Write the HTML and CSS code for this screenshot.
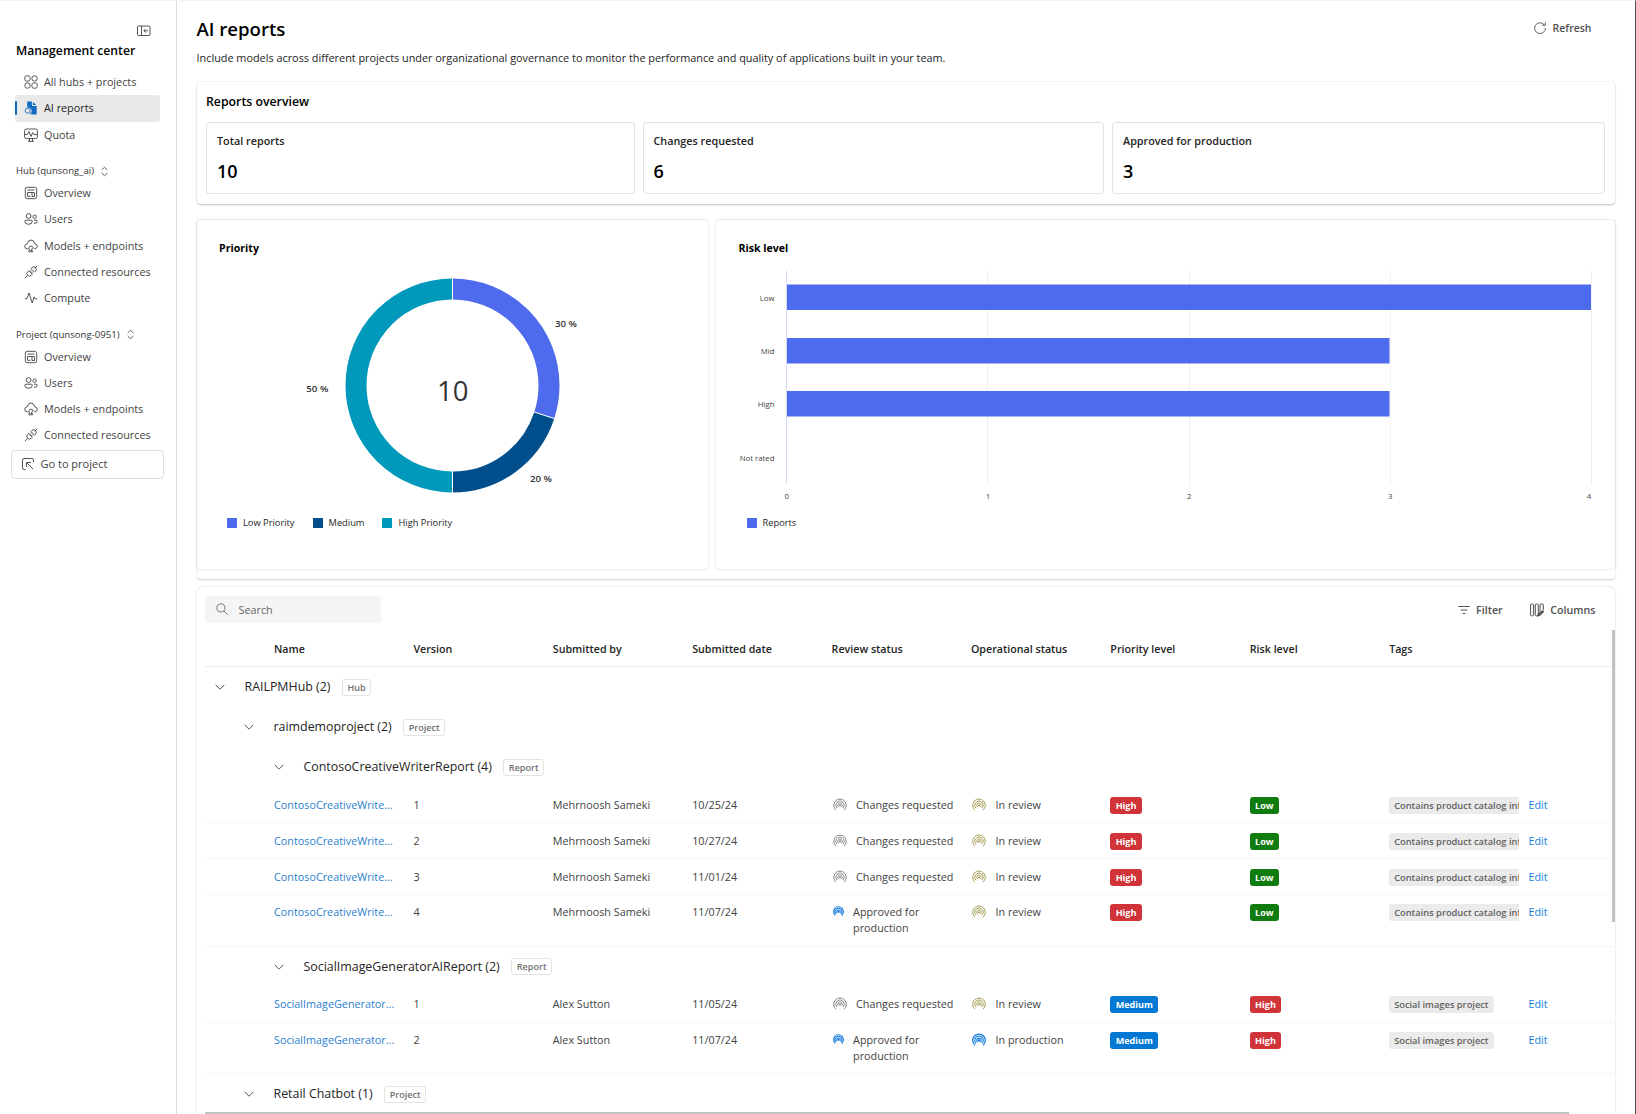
FILE: index.html
```html
<!DOCTYPE html>
<html lang="en">
<head>
    <meta charset="UTF-8">
    <meta name="viewport" content="width=device-width, initial-scale=1.0">
    <title>AI reports - Management center</title>
    <link rel="stylesheet" href="styles.css">
</head>
<body>

    <!-- Icons -->
    <svg class="icon-defs">
        <symbol id="i-collapse" viewBox="0 0 14 12"><rect x=".5" y="1" width="12.5" height="9.5" rx="1"/><path d="M4.500 1v9.5M11 5.800H7M8.600 4L6.800 5.800l1.800 1.800"/></symbol>
        <symbol id="i-hubs" viewBox="0 0 14 14"><rect x=".8" y=".8" width="5.300" height="5.300" rx="1.800"/><rect x="7.900" y=".8" width="5.300" height="5.300" rx="2.500"/><rect x=".8" y="7.900" width="5.300" height="5.300" rx="2.500"/><rect x="7.900" y="7.900" width="5.300" height="5.300" rx="1.800"/></symbol>
        <symbol id="i-report" viewBox="0 0 14 14"><path class="solid" d="M3.200 1.300Q3.200.5 4 .5h3.900v3.600q0 .9.9.9h3.900v7.600q0 .8-.8.8H8.200L6.900 12q1.200-1.600.5-3.400Q6.200 6.200 3.200 6.400z"/><path class="solid" d="M8.900.9l3.400 3.200H8.900z"/><circle cx="3.700" cy="9.700" r="2.500"/><path d="M5.500 11.500l2 2"/></symbol>
        <symbol id="i-quota" viewBox="0 0 14 14"><rect x=".6" y="1" width="12.800" height="9.600" rx="1.800"/><path d="M4 13.300h6M5.500 10.800v2.400M8.500 10.800v2.400M.8 6.500h2.500l1.700-3 2 5 1.700-4 1.200 2h3.300"/></symbol>
        <symbol id="i-overview" viewBox="0 0 14 14"><rect x="1.300" y="1.300" width="11.400" height="11.400" rx="2"/><path d="M3.500 4h7M3.500 6.500h7M3.500 6.500v3.800H6.500M8 7v3.500h2.500V7"/></symbol>
        <symbol id="i-users" viewBox="0 0 14 14"><circle cx="4.600" cy="4" r="2.400"/><circle cx="10.600" cy="4.700" r="1.700"/><path d="M2 8.200h5.300q1 0 1 1.100 0 3-3.700 3T.8 9.300q0-1.100 1.200-1.100zM9.900 8.200h2.300q1 0 1 1 0 2.300-3.200 2.200"/></symbol>
        <symbol id="i-cloud" viewBox="0 0 14 14"><path d="M4 9.800h-.7Q.7 9.600.7 7.300.8 5 3.300 4.800 3.900 1 7 1t3.700 3.800q2.500.2 2.600 2.500-.1 2.300-2.500 2.500h-.6"/><path d="M5 8.800Q5 7.200 7 7.200T9.200 8.800q0 1.200-1.600 1.200v1.500M5 8.800q-.5 2 .8 2.200"/><circle cx="5.600" cy="12.200" r=".9"/><circle cx="7.900" cy="12.300" r=".8"/></symbol>
        <symbol id="i-plug" viewBox="0 0 14 14"><path d="M.8 13.200l2.500-2.500M13.200.8l-2.500 2.500M4.800 5.600l3.600 3.600-1.100 1.100q-1.900 1.700-3.700 0-1.800-1.900 0-3.600zM6.900 3.500L8 2.400q1.800-1.500 3.500.100 1.600 1.700.1 3.500l-1.100 1.100z"/><path d="M5.900 6.800l1.600-1.500M7.300 8.200l1.500-1.500"/></symbol>
        <symbol id="i-pulse" viewBox="0 0 14 14"><path d="M.8 7.800h2L5 2l3.200 10L10.200 6l.9 1.800h2.100"/></symbol>
        <symbol id="i-updown" viewBox="0 0 8 12"><path d="M.8 4.200L4 1.200l3.200 3M.8 7.800l3.200 3 3.200-3"/></symbol>
        <symbol id="i-goto" viewBox="0 0 14 14"><path d="M12.500 5V3q0-1.500-1.500-1.500H3Q1.500 1.500 1.500 3v8q0 1.500 1.500 1.500h1.500M5.500 10V5.500H10M5.700 5.700l6.300 6.300"/></symbol>
        <symbol id="i-refresh" viewBox="0 0 14 14"><path d="M11.500 4.200A5.400 5.400 0 1 0 12.400 7M12.300 1.300v3H9.300"/></symbol>
        <symbol id="i-search" viewBox="0 0 14 14"><circle cx="5.500" cy="5.500" r="4.500"/><path d="M8.800 8.800l4.400 4.400"/></symbol>
        <symbol id="i-filter" viewBox="0 0 12 10"><path d="M.5 1.500h11M2.700 5h6.600M4.700 8.500h2.600"/></symbol>
        <symbol id="i-columns" viewBox="0 0 14 14"><rect x=".6" y="1" width="3" height="11.800" rx="1"/><rect x="5.300" y="1" width="3" height="11.800" rx="1"/><path d="M10 9V2q0-1 1-1h1.300q1 0 1 1v5"/><path class="solid" d="M7 13.800l.7-2.700 4.900-4.100 1.700 1.700-4.600 4.300z"/></symbol>
        <symbol id="i-chevron" viewBox="0 0 10 6"><path d="M.6.800L5 5.200 9.400.8"/></symbol>
        <symbol id="i-signal" viewBox="0 0 14 14"><path d="M3 12.200a6.300 6.300 0 1 1 8 0M4 10.200a4.200 4.200 0 1 1 6 0"/><path d="M5.500 8.900a2.200 2.200 0 1 1 3 0"/><circle class="dot" cx="7" cy="7.400" r=".6"/></symbol>
    </svg>

    <div class="page">

        <!-- Sidebar -->
        <nav class="sidebar">
            <div class="collapse"><svg class="icon-collapse"><use href="#i-collapse"/></svg></div>
            <h2 class="sidebar-title">Management center</h2>
            <a class="nav-item"><svg class="icon"><use href="#i-hubs"/></svg>All hubs + projects</a>
            <a class="nav-item active"><svg class="icon"><use href="#i-report"/></svg>AI reports</a>
            <a class="nav-item"><svg class="icon"><use href="#i-quota"/></svg>Quota</a>

            <div class="nav-group">Hub (qunsong_ai)<svg class="icon-updown"><use href="#i-updown"/></svg></div>
            <a class="nav-item"><svg class="icon"><use href="#i-overview"/></svg>Overview</a>
            <a class="nav-item"><svg class="icon"><use href="#i-users"/></svg>Users</a>
            <a class="nav-item"><svg class="icon"><use href="#i-cloud"/></svg>Models + endpoints</a>
            <a class="nav-item"><svg class="icon"><use href="#i-plug"/></svg>Connected resources</a>
            <a class="nav-item"><svg class="icon"><use href="#i-pulse"/></svg>Compute</a>

            <div class="nav-group">Project (qunsong-0951)<svg class="icon-updown"><use href="#i-updown"/></svg></div>
            <a class="nav-item"><svg class="icon"><use href="#i-overview"/></svg>Overview</a>
            <a class="nav-item"><svg class="icon"><use href="#i-users"/></svg>Users</a>
            <a class="nav-item"><svg class="icon"><use href="#i-cloud"/></svg>Models + endpoints</a>
            <a class="nav-item"><svg class="icon"><use href="#i-plug"/></svg>Connected resources</a>
            <a class="goto"><svg class="icon"><use href="#i-goto"/></svg>Go to project</a>
        </nav>

        <!-- Main content -->
        <main class="main">
            <div class="page-header">
                <h1>AI reports</h1>
                <a class="refresh"><svg class="icon"><use href="#i-refresh"/></svg>Refresh</a>
            </div>
            <p class="intro">Include models across different projects under organizational governance to monitor the performance and quality of applications built in your team.</p>

            <section class="overview">
                <h3>Reports overview</h3>
                <div class="stats">
                    <div class="stat"><span class="stat-label">Total reports</span><span class="stat-value">10</span></div>
                    <div class="stat"><span class="stat-label">Changes requested</span><span class="stat-value">6</span></div>
                    <div class="stat"><span class="stat-label">Approved for production</span><span class="stat-value">3</span></div>
                </div>
            </section>

            <section class="charts">
                <div class="chart-card">
                    <h4>Priority</h4>
                    <svg class="donut" viewBox="0 0 464 240">
                        <g transform="rotate(-90 233.5 128.5)" fill="none" stroke-width="21">
                            <circle cx="233.5" cy="128.5" r="96.5" stroke="#4f6bed" stroke-dasharray="181.9 606.33"/>
                            <circle cx="233.5" cy="128.5" r="96.5" stroke="#004e8c" stroke-dasharray="121.27 606.33" stroke-dashoffset="-181.9"/>
                            <circle cx="233.5" cy="128.5" r="96.5" stroke="#0099bc" stroke-dasharray="303.16 606.33" stroke-dashoffset="-303.17"/>
                        </g>
                        <path d="M233.5 20v24M233.5 212v25M314.300 154.700l22 7.200" stroke="#fff"/>
                        <text class="donut-total" x="233.800" y="144">10</text>
                        <text class="donut-label" x="336" y="70">30 %</text>
                        <text class="donut-label" x="311" y="225">20 %</text>
                        <text class="donut-label" x="87.300" y="135">50 %</text>
                    </svg>
                    <div class="legend">
                        <span class="legend-item"><i class="swatch low"></i>Low Priority</span>
                        <span class="legend-item"><i class="swatch medium"></i>Medium</span>
                        <span class="legend-item"><i class="swatch high"></i>High Priority</span>
                    </div>
                </div>
                <div class="chart-card">
                    <h4>Risk level</h4>
                    <svg class="bars" viewBox="0 0 860 240">
                        <path d="M248.500 13.500v214M450.500 13.500v214M651.500 13.500v214M852.500 13.500v214" stroke="#f0f0f0"/>
                        <path d="M47.500 13.500v214" stroke="#d5dafa"/>
                        <g fill="#4f6bed">
                            <rect x="48" y="27.500" width="804" height="25.500"/>
                            <rect x="48" y="81" width="602.500" height="25.500"/>
                            <rect x="48" y="134" width="602.500" height="25.500"/>
                        </g>
                        <g class="axis-y">
                            <text x="35.500" y="44">Low</text>
                            <text x="35.500" y="97">Mid</text>
                            <text x="35.500" y="150">High</text>
                            <text x="35.500" y="204">Not rated</text>
                        </g>
                        <g class="axis-x">
                            <text x="47.700" y="242">0</text>
                            <text x="249" y="242">1</text>
                            <text x="450.300" y="242">2</text>
                            <text x="651.300" y="242">3</text>
                            <text x="850" y="242">4</text>
                        </g>
                    </svg>
                    <div class="legend">
                        <span class="legend-item"><i class="swatch low"></i>Reports</span>
                    </div>
                </div>
            </section>

            <section class="table-card">
                <div class="toolbar">
                    <div class="search"><svg class="icon-search"><use href="#i-search"/></svg>Search</div>
                    <a class="tool"><svg class="icon-filter"><use href="#i-filter"/></svg>Filter</a>
                    <a class="tool"><svg class="icon-columns"><use href="#i-columns"/></svg>Columns</a>
                </div>

                <div class="table">
                    <div class="row head">
                        <span>Name</span><span>Version</span><span>Submitted by</span><span>Submitted date</span><span>Review status</span><span>Operational status</span><span>Priority level</span><span>Risk level</span><span>Tags</span>
                    </div>

                    <div class="group level-1"><svg class="chevron"><use href="#i-chevron"/></svg>RAILPMHub (2)<span class="kind">Hub</span></div>
                    <div class="group level-2"><svg class="chevron"><use href="#i-chevron"/></svg>raimdemoproject (2)<span class="kind">Project</span></div>
                    <div class="group level-3"><svg class="chevron"><use href="#i-chevron"/></svg>ContosoCreativeWriterReport (4)<span class="kind">Report</span></div>

                    <div class="row">
                        <a class="link">ContosoCreativeWrite...</a><span>1</span><span>Mehrnoosh Sameki</span><span>10/25/24</span>
                        <span class="status"><svg class="signal gray"><use href="#i-signal"/></svg>Changes requested</span>
                        <span class="status"><svg class="signal olive"><use href="#i-signal"/></svg>In review</span>
                        <span><b class="badge red">High</b></span><span><b class="badge green">Low</b></span>
                        <span class="tags"><b class="tag">Contains product catalog info</b></span><a class="link edit">Edit</a>
                    </div>
                    <div class="row">
                        <a class="link">ContosoCreativeWrite...</a><span>2</span><span>Mehrnoosh Sameki</span><span>10/27/24</span>
                        <span class="status"><svg class="signal gray"><use href="#i-signal"/></svg>Changes requested</span>
                        <span class="status"><svg class="signal olive"><use href="#i-signal"/></svg>In review</span>
                        <span><b class="badge red">High</b></span><span><b class="badge green">Low</b></span>
                        <span class="tags"><b class="tag">Contains product catalog info</b></span><a class="link edit">Edit</a>
                    </div>
                    <div class="row">
                        <a class="link">ContosoCreativeWrite...</a><span>3</span><span>Mehrnoosh Sameki</span><span>11/01/24</span>
                        <span class="status"><svg class="signal gray"><use href="#i-signal"/></svg>Changes requested</span>
                        <span class="status"><svg class="signal olive"><use href="#i-signal"/></svg>In review</span>
                        <span><b class="badge red">High</b></span><span><b class="badge green">Low</b></span>
                        <span class="tags"><b class="tag">Contains product catalog info</b></span><a class="link edit">Edit</a>
                    </div>
                    <div class="row tall">
                        <a class="link">ContosoCreativeWrite...</a><span>4</span><span>Mehrnoosh Sameki</span><span>11/07/24</span>
                        <span class="status"><svg class="signal blue small"><use href="#i-signal"/></svg>Approved for<br>production</span>
                        <span class="status"><svg class="signal olive"><use href="#i-signal"/></svg>In review</span>
                        <span><b class="badge red">High</b></span><span><b class="badge green">Low</b></span>
                        <span class="tags"><b class="tag">Contains product catalog info</b></span><a class="link edit">Edit</a>
                    </div>

                    <div class="group level-3"><svg class="chevron"><use href="#i-chevron"/></svg>SocialImageGeneratorAIReport (2)<span class="kind">Report</span></div>

                    <div class="row">
                        <a class="link">SocialImageGenerator...</a><span>1</span><span>Alex Sutton</span><span>11/05/24</span>
                        <span class="status"><svg class="signal gray"><use href="#i-signal"/></svg>Changes requested</span>
                        <span class="status"><svg class="signal olive"><use href="#i-signal"/></svg>In review</span>
                        <span><b class="badge blue-bg">Medium</b></span><span><b class="badge red">High</b></span>
                        <span class="tags"><b class="tag">Social images project</b></span><a class="link edit">Edit</a>
                    </div>
                    <div class="row tall">
                        <a class="link">SocialImageGenerator...</a><span>2</span><span>Alex Sutton</span><span>11/07/24</span>
                        <span class="status"><svg class="signal blue small"><use href="#i-signal"/></svg>Approved for<br>production</span>
                        <span class="status"><svg class="signal blue strong"><use href="#i-signal"/></svg>In production</span>
                        <span><b class="badge blue-bg">Medium</b></span><span><b class="badge red">High</b></span>
                        <span class="tags"><b class="tag">Social images project</b></span><a class="link edit">Edit</a>
                    </div>

                    <div class="group level-2"><svg class="chevron"><use href="#i-chevron"/></svg>Retail Chatbot (1)<span class="kind">Project</span></div>
                    <div class="scroll-y"></div>
                    <div class="scroll-x"></div>
                </div>
            </section>
        </main>
    </div>

</body>
</html>
```
FILE: styles.css
```css
* {
    box-sizing: border-box;
}

body {
    margin: 0;
    font-family: "Open Sans", "Noto Sans", sans-serif;
    font-size: 10.8px;
    line-height: 16px;
    color: #424242;
    background: #fff;
    overflow: hidden;
}

h1, h2, h3, h4, p {
    margin: 0;
    color: #000;
    font-weight: 600;
}

svg {
    flex: none;
    fill: none;
    stroke: currentColor;
    overflow: visible;
}

.icon-defs {
    display: none;
}

.solid {
    fill: currentColor;
    stroke: none;
}

.icon {
    width: 14px;
    height: 14px;
    stroke-width: 0.9;
}

.page {
    display: flex;
    height: 1114px;
    border-top: 1px solid #f3f4f9;
    border-right: 1px solid #505050;
    overflow: hidden;
}

/* Sidebar */
.sidebar {
    flex: none;
    width: 177px;
    padding: 24px 12px 0 11px;
    border-right: 1px solid #dcdcdc;
}

.collapse {
    display: flex;
    justify-content: flex-end;
    height: 16px;
    padding-right: 13px;
}

.icon-collapse {
    width: 14px;
    height: 12px;
    stroke-width: 0.9;
}

.sidebar-title {
    font-size: 12.2px;
    line-height: 20px;
    margin: 0 0 8px 5px;
}

.nav-item {
    display: flex;
    align-items: center;
    gap: 6.5px;
    width: 145px;
    height: 26.3px;
    margin-left: 4px;
    padding-left: 8.5px;
    border-radius: 3px;
    font-size: 10.8px;
    white-space: nowrap;
}

.nav-item.active {
    background: #e9e9e9;
    color: #242424;
    padding-left: 0;
}

.nav-item.active::before {
    content: "";
    width: 2px;
    height: 14px;
    border-radius: 1px;
    background: #0f6cbd;
}

.nav-item.active .icon {
    color: #0f6cbd;
}

.nav-group {
    display: flex;
    align-items: center;
    gap: 7px;
    height: 17px;
    margin: 15px 0 0 5px;
    font-size: 9.6px;
    color: #333;
}

.icon-updown {
    width: 7px;
    height: 11px;
    stroke-width: 0.9;
}

.goto {
    display: flex;
    align-items: center;
    gap: 5.5px;
    height: 29px;
    width: 153px;
    margin-top: 1px;
    padding-left: 9px;
    border: 1px solid #dedede;
    border-radius: 4px;
    font-size: 11px;
}

/* Main column */
.main {
    flex: 1;
    min-width: 0;
    padding: 14px 20.5px 0 19.5px;
}

.page-header {
    display: flex;
    justify-content: space-between;
    height: 28px;
}

h1 {
    font-size: 18.6px;
    line-height: 27px;
}

.refresh {
    display: flex;
    align-items: center;
    gap: 6px;
    height: 26px;
    margin-right: 23px;
    font-weight: 600;
    font-size: 10.5px;
    color: #505050;
}

.intro {
    font-weight: 400;
    font-size: 10.86px;
    color: #242424;
    height: 39px;
    padding-top: 7px;
}

.overview {
    height: 122px;
    padding: 11px 9.5px 0;
    border-radius: 4px;
    box-shadow: 0 1px 2px rgba(0, 0, 0, 0.22), 0 0 2px rgba(0, 0, 0, 0.12);
}

.overview h3 {
    font-size: 12.3px;
    line-height: 18px;
    margin-bottom: 11px;
}

.stats {
    display: grid;
    grid-template-columns: 428.5px 461.5px 1fr;
    gap: 8px;
}

.stat {
    display: flex;
    flex-direction: column;
    height: 72px;
    padding: 10px;
    border: 1px solid #e2e2e2;
    border-radius: 3px;
}

.stat-label {
    font-weight: 600;
    font-size: 10.8px;
    color: #242424;
}

.stat-value {
    margin-top: 10px;
    font-weight: 600;
    font-size: 18px;
    line-height: 24px;
    color: #000;
}

/* Charts */
.charts {
    display: grid;
    grid-template-columns: 511.5px minmax(0, 1fr);
    gap: 8px;
    height: 359px;
    margin-top: 16px;
    padding-bottom: 10px;
    border-radius: 4px;
    box-shadow: 0 1px 2px rgba(0, 0, 0, 0.2);
}

.chart-card {
    padding: 19px 0 0 22.5px;
    border-radius: 3px;
    box-shadow: 0 0 2px rgba(0, 0, 0, 0.24);
}

.chart-card h4 {
    font-size: 10.6px;
    font-weight: 700;
    line-height: 18px;
}

.donut, .bars {
    display: block;
    height: 240px;
    stroke: none;
}

.donut {
    width: 464px;
}

.bars {
    width: 860px;
}

.donut-total {
    font-size: 27.5px;
    fill: #333;
    text-anchor: middle;
}

.donut-label {
    font-size: 9.7px;
    font-weight: 600;
    fill: #333;
}

.axis-y, .axis-x {
    font-size: 7.8px;
    fill: #444;
    text-anchor: end;
}

.axis-x {
    text-anchor: middle;
}

.legend {
    display: flex;
    gap: 18px;
    margin-top: 18px;
    padding-left: 8px;
    font-size: 9.3px;
    color: #242424;
}

.legend-item {
    display: flex;
    align-items: center;
    gap: 6px;
}

.swatch {
    width: 10px;
    height: 10px;
}

.low {
    background: #4f6bed;
}

.medium {
    background: #004e8c;
}

.high {
    background: #0099bc;
}

/* Reports table */
.table-card {
    height: 560px;
    margin-top: 8px;
    padding: 9px 0 0 8.5px;
    border-radius: 6px;
    box-shadow: 0 0 2px rgba(0, 0, 0, 0.22);
}

.toolbar {
    display: flex;
    align-items: center;
    height: 27px;
    margin-bottom: 7px;
    padding-right: 19px;
}

.search {
    display: flex;
    align-items: center;
    gap: 10px;
    width: 176px;
    height: 27px;
    margin-right: auto;
    padding-left: 11px;
    background: #f5f5f5;
    border-radius: 3px;
    color: #666;
}

.icon-search {
    width: 12.5px;
    height: 12.5px;
}

.tool {
    display: flex;
    align-items: center;
    gap: 6.5px;
    margin-left: 27px;
    font-weight: 600;
    font-size: 10.7px;
    color: #505050;
}

.icon-filter {
    width: 12px;
    height: 10px;
}

.icon-columns {
    width: 14px;
    height: 14px;
}

.table {
    position: relative;
    height: 484px;
}

.row {
    display: grid;
    grid-template-columns: repeat(9, 139.4px) 60px;
    height: 35.9px;
    padding: 9.5px 0 0 69px;
    border-bottom: 1px solid #f6f6f6;
    white-space: nowrap;
}

.head {
    height: 37px;
    padding-top: 10.5px;
    border-bottom-color: #ededed;
    font-weight: 600;
    font-size: 10.7px;
    color: #242424;
}

.tall {
    height: 51.7px;
    padding-top: 9px;
}

.group {
    display: flex;
    align-items: center;
    height: 40.1px;
    font-size: 12.4px;
    color: #242424;
}

.level-1 {
    padding-left: 10px;
}

.level-2 {
    padding-left: 39px;
}

.level-3 {
    padding-left: 69px;
}

.chevron {
    width: 10px;
    height: 6px;
    margin-right: 19.5px;
    color: #555;
}

.kind {
    height: 17px;
    margin-left: 11.5px;
    padding: 0 4.5px;
    border: 1px solid #e3e3e3;
    border-radius: 3px;
    font-size: 9.1px;
    font-weight: 600;
    line-height: 15px;
    color: #707070;
}

.link {
    color: #2b7fd0;
}

.edit {
    color: #1a7fe0;
}

.status {
    display: flex;
    align-items: flex-start;
    gap: 9.5px;
    padding-left: 1px;
}

.signal {
    width: 14px;
    height: 14px;
    margin-top: 1px;
    stroke-width: 0.9;
}

.signal.small {
    width: 11px;
    height: 11px;
    margin-top: 2px;
    stroke-width: 1.4;
}

.signal.strong {
    stroke-width: 1.3;
}

.dot {
    fill: currentColor;
}

.gray {
    color: #777;
}

.olive {
    color: #9b9340;
}

.blue {
    color: #1a7fe0;
}

.badge, .tag {
    display: inline-block;
    height: 17px;
    padding: 0 5.3px;
    border-radius: 3px;
    font-size: 9.1px;
    font-weight: 700;
    line-height: 17px;
    color: #fff;
    vertical-align: top;
}

.red {
    background: #d13438;
}

.green {
    background: #107c10;
}

.blue-bg {
    background: #0078d4;
}

.tags {
    width: 130px;
    overflow: hidden;
}

.tag {
    padding: 0 5px;
    background: #ebebeb;
    font-size: 9.3px;
    font-weight: 600;
    color: #616161;
}

/* Scrollbars drawn over the table edges */
.scroll-y {
    position: absolute;
    top: 0;
    right: 0;
    width: 3px;
    height: 292px;
    background: #c1c1c1;
}

.scroll-x {
    position: absolute;
    left: 0;
    bottom: 0;
    width: 1364px;
    height: 2px;
    background: #c1c1c1;
}
```
